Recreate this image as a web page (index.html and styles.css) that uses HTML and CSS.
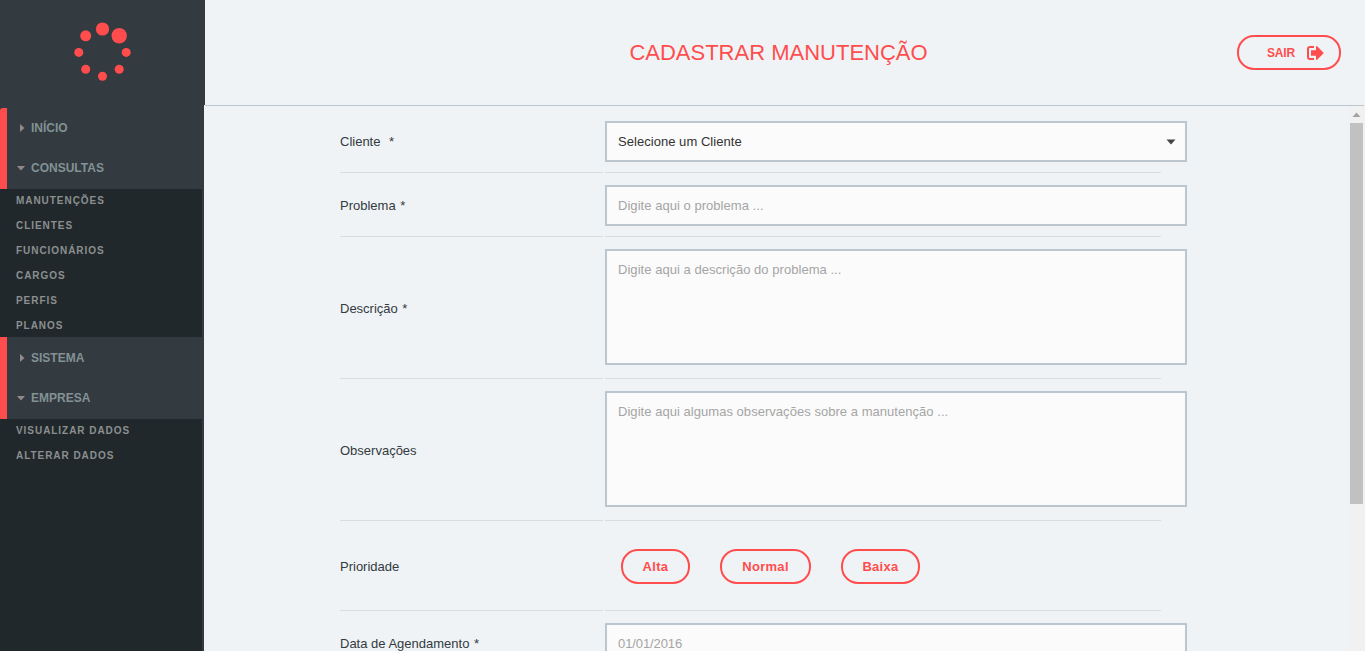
FILE: index.html
```html
<!DOCTYPE html>
<html lang="pt-BR">
<head>
<meta charset="utf-8">
<title>Cadastrar Manutenção</title>
<link rel="stylesheet" href="styles.css">
</head>
<body>
<header class="topbar">
  <div class="brand">
    <svg class="logo" width="60" height="62" viewBox="0 0 60 62" fill="#ff4d4d">
      <circle cx="30.5" cy="9" r="6.6"/><circle cx="47.2" cy="15.8" r="7.7"/>
      <circle cx="54.2" cy="32.4" r="4.5"/><circle cx="47.2" cy="49.2" r="4.5"/>
      <circle cx="30.5" cy="56.2" r="4.5"/><circle cx="13.7" cy="49.2" r="4.5"/>
      <circle cx="6.8" cy="32.4" r="4.5"/><circle cx="13.7" cy="15.8" r="5.5"/>
    </svg>
  </div>
  <div class="heading">
    <h1 class="title">CADASTRAR MANUTENÇÃO</h1>
    <button class="pill logout">SAIR
      <svg width="17" height="14" viewBox="0 0 17 14"><path d="M7 1H3Q1 1 1 3v8q0 2 2 2h4" fill="none" stroke="#ff4d4d" stroke-width="2"/><path d="M4 4.2h5V.3h1.2L16.8 7l-6.6 6.7H9V9.8H4z" fill="#ff4d4d"/></svg>
    </button>
  </div>
</header>
<div class="workspace">
  <nav class="sidebar">
    <div class="menu">
      <div class="group">
        <a class="item"><i class="caret right"></i>INÍCIO</a>
        <a class="item"><i class="caret down"></i>CONSULTAS</a>
      </div>
      <div class="submenu">
        <a>MANUTENÇÕES</a><a>CLIENTES</a><a>FUNCIONÁRIOS</a><a>CARGOS</a><a>PERFIS</a><a>PLANOS</a>
      </div>
      <div class="group second">
        <a class="item"><i class="caret right"></i>SISTEMA</a>
        <a class="item"><i class="caret down"></i>EMPRESA</a>
      </div>
      <div class="submenu">
        <a>VISUALIZAR DADOS</a><a>ALTERAR DADOS</a>
      </div>
    </div>
  </nav>
  <main class="content">
    <form class="form">
      <div class="row">
        <label class="label">Cliente<span class="required wide">*</span></label>
        <div class="cell"><div class="field select"><span>Selecione um Cliente</span><svg width="10" height="6" viewBox="0 0 10 6"><path d="M.5.5h9L5 5.5z" fill="#444"/></svg></div></div>
      </div>
      <div class="row">
        <label class="label">Problema<span class="required">*</span></label>
        <div class="cell"><input class="field" placeholder="Digite aqui o problema ..."></div>
      </div>
      <div class="row tall">
        <label class="label">Descrição<span class="required">*</span></label>
        <div class="cell"><textarea class="field area" placeholder="Digite aqui a descrição do problema ..."></textarea></div>
      </div>
      <div class="row tall">
        <label class="label">Observações</label>
        <div class="cell"><textarea class="field area" placeholder="Digite aqui algumas observações sobre a manutenção ..."></textarea></div>
      </div>
      <div class="row priority">
        <label class="label">Prioridade</label>
        <div class="cell options">
          <button type="button" class="pill high">Alta</button>
          <button type="button" class="pill normal">Normal</button>
          <button type="button" class="pill low">Baixa</button>
        </div>
      </div>
      <div class="row">
        <label class="label">Data de Agendamento<span class="required">*</span></label>
        <div class="cell"><input class="field date" placeholder="01/01/2016"></div>
      </div>
    </form>
    <div class="scrollbar">
      <svg width="13" height="17" viewBox="0 0 13 17"><path d="M6.5 6.5l4 4.5h-8z" fill="#a3a3a3"/></svg>
      <div class="thumb"></div>
    </div>
  </main>
</div>
</body>
</html>
```
FILE: styles.css
```css
* { box-sizing: border-box; }
body {
  margin: 0;
  height: 651px;
  overflow: hidden;
  background: #eff3f6;
  color: #333a40;
  font: 13px/17px "Liberation Sans", Arial, sans-serif;
}
.topbar { display: flex; height: 105px; }
.brand { width: 205px; height: 105px; padding: 20px 0 0 72px; background: #333a40; }
.logo { display: block; }
.heading {
  flex: 1;
  display: grid;
  grid-template-columns: 1fr auto;
  align-items: center;
  height: 106px;
  margin-right: 1px;
  padding: 0 23px 0 115px;
  border-bottom: 1px solid #bbc6cf;
}
.title { margin: 0; text-align: center; color: #ff4d4d; font-size: 22px; font-weight: 400; line-height: 26px; }
.pill {
  height: 35px;
  padding: 0;
  border: 2px solid #ff4d4d;
  border-radius: 17px;
  background: transparent;
  color: #ff4d4d;
  font: bold 13px/17px "Liberation Sans", Arial, sans-serif;
  letter-spacing: .3px;
}
.logout { display: flex; align-items: center; gap: 12px; width: 104px; padding: 1px 0 0 28px; font-size: 12px; letter-spacing: -.2px; }
.logout svg { margin-top: -1px; }
.workspace { display: flex; height: 546px; }
.sidebar { width: 204px; padding-right: 2px; background: #333a40; }
.menu { display: flex; flex-direction: column; height: 100%; padding-top: 3px; background: #333a40; }
.group { height: 81px; border-left: 7px solid #ff4d4d; background: #333a40; }
.group:first-child { border-top-left-radius: 3px; }
.second { height: 82px; padding-top: 1px; }
.item { display: flex; align-items: center; height: 40px; padding-left: 10px; color: #829294; font-size: 12px; font-weight: bold; }
.caret { width: 10px; height: 8px; margin-right: 4px; background: #91898b; }
.right { clip-path: polygon(30% 0, 75% 50%, 30% 100%); }
.down { clip-path: polygon(0 25%, 80% 25%, 40% 80%); }
.submenu { display: flex; flex-direction: column; gap: 2px; padding-left: 16px; background: #21282b; color: #8b8f90; font-size: 10px; font-weight: bold; letter-spacing: .95px; }
.submenu:last-child { flex: 1; }
.submenu a { line-height: 23px; }
.content { flex: 1; display: flex; justify-content: space-between; height: 546px; padding-top: 1px; overflow: hidden; }
.form { width: 983px; padding: 3px 0 0 136px; }
.row { display: grid; grid-template-columns: 263px 556px; column-gap: 2px; height: 64px; }
.tall { height: 142px; }
.priority { height: 90px; }
.label { display: flex; align-items: center; padding-top: 1px; border-bottom: 1px solid #dadcdd; }
.required { margin-left: 4.5px; }
.wide { margin-left: 8.5px; }
.cell { padding-top: 12px; border-bottom: 1px solid #dadcdd; }
.field {
  display: block;
  width: 582px;
  height: 41px;
  padding: 0 11px;
  border: 2px solid #bbc6cf;
  border-radius: 0;
  background: #fbfbfb;
  color: #333;
  font: 13px/17px "Liberation Sans", Arial, sans-serif;
  letter-spacing: .04px;
}
.field::placeholder { color: #a5a5a5; opacity: 1; }
.date { letter-spacing: -.1px; }
.area { height: 116px; padding-top: 10px; resize: none; }
.select { display: flex; justify-content: space-between; align-items: center; padding-right: 9px; }
.options { display: flex; align-items: center; gap: 30px; padding: 2px 0 0 16px; }
.high { width: 69px; }
.normal { width: 91px; }
.low { width: 79px; }
.scrollbar { width: 17px; padding: 0 2px; background: #f1f1f1; }
.scrollbar svg { display: block; }
.thumb { height: 381px; background: #c1c1c1; }
```
